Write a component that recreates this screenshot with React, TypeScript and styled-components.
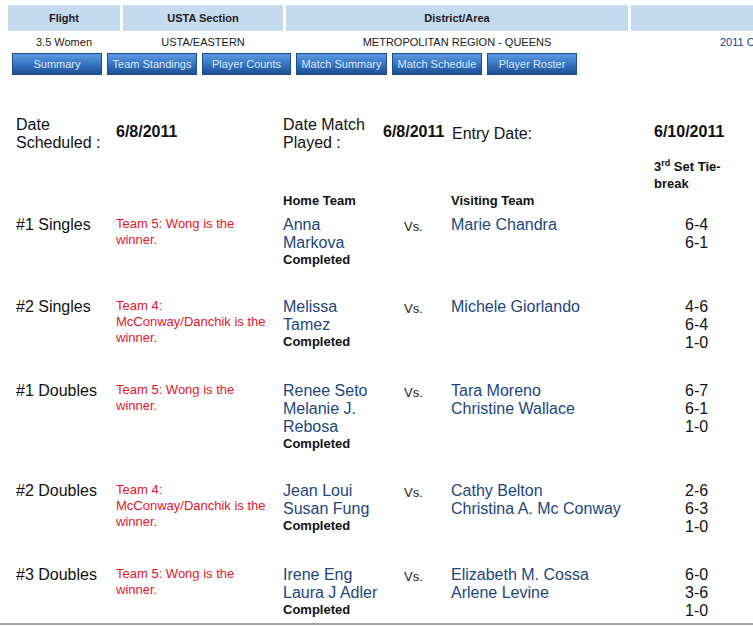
import styled, { createGlobalStyle } from "styled-components";

const GlobalStyle = createGlobalStyle`
	html, body {
		margin: 0;
		padding: 0;
		overflow: hidden;
		background: #ffffff;
	}
	body {
		font-family: "Liberation Sans", Arial, sans-serif;
		color: #111111;
	}
`;

const Frame = styled.div`
	box-sizing: border-box;
	width: 753px;
	height: 625px;
	padding: 5px 0 0 8px;
	overflow: hidden;
	border-bottom: 2px solid #a3a3a3;
`;

const InfoGrid = styled.div`
	display: grid;
	grid-template-columns: 112px 160px 342px 300px;
	column-gap: 3px;
	font-size: 11px;
`;

const InfoHead = styled.div`
	height: 26px;
	line-height: 26px;
	background: #c6daf0;
	text-align: center;
	font-weight: bold;
	color: #1c1c1c;
`;

const InfoCell = styled.div<{ $link?: boolean }>`
	margin-top: 3px;
	line-height: 16px;
	text-align: center;
	white-space: nowrap;
	color: ${(p) => (p.$link ? "#1d3f86" : "#1a1a1a")};
`;

const ButtonBar = styled.div`
	display: flex;
	gap: 5px;
	margin: 3px 0 0 4px;
`;

const NavButton = styled.button<{ $w?: number }>`
	box-sizing: border-box;
	width: ${(p) => p.$w ?? 90}px;
	height: 22px;
	padding: 0;
	border: 1px solid #1d4f8e;
	background: linear-gradient(#5e9be0 0%, #3a78c6 45%, #1d4f92 100%);
	color: #dce9f8;
	font-family: "Liberation Sans", Arial, sans-serif;
	font-size: 11px;
	cursor: pointer;
`;

const Content = styled.div`
	padding-left: 8px;
`;

const DateGrid = styled.div`
	display: grid;
	grid-template-columns: 100px 167px 100px 69px 202px auto;
	align-items: center;
	margin-top: 41px;
	font-size: 16px;
	line-height: 18px;
`;

const DateValue = styled.div`
	font-weight: bold;
	margin-top: -4px;
`;

const Row = styled.div<{ $pad?: number }>`
	display: grid;
	grid-template-columns: 100px 167px 121px 47px 203px auto;
	align-items: start;
	padding-bottom: ${(p) => p.$pad ?? 0}px;
`;

const TieLabel = styled.div`
	grid-column: 6;
	margin-top: 6px;
	font-size: 13px;
	font-weight: bold;
	line-height: 17px;
	width: 74px;
	sup {
		font-size: 9px;
		line-height: 0;
	}
`;

const ColHead = styled.div<{ $col: number }>`
	grid-column: ${(p) => p.$col};
	font-size: 13px;
	font-weight: bold;
	line-height: 16px;
	margin-top: 1px;
`;

const RowLabel = styled.div`
	font-size: 16px;
	line-height: 18px;
	padding-top: 7px;
`;

const Winner = styled.div`
	font-size: 13px;
	line-height: 16px;
	color: #e3172a;
	padding-top: 7px;
	padding-right: 10px;
`;

const Players = styled.div`
	padding-top: 7px;
	padding-right: 20px;
`;

const Player = styled.div`
	font-size: 16px;
	line-height: 18px;
	color: #21467c;
`;

const Status = styled.div`
	font-size: 13px;
	font-weight: bold;
	line-height: 16px;
`;

const Versus = styled.div`
	font-size: 13px;
	line-height: 18px;
	padding-top: 9px;
	color: #222222;
`;

const Scores = styled.div`
	font-size: 16px;
	line-height: 18px;
	padding: 7px 0 0 31px;
`;

type Match = {
	label: string;
	winner: string;
	home: string[];
	visitors: string[];
	scores: string[];
};

const matches: Match[] = [
	{
		label: "#1 Singles",
		winner: "Team 5: Wong is the winner.",
		home: ["Anna Markova"],
		visitors: ["Marie Chandra"],
		scores: ["6-4", "6-1"],
	},
	{
		label: "#2 Singles",
		winner: "Team 4: McConway/Danchik is the winner.",
		home: ["Melissa Tamez"],
		visitors: ["Michele Giorlando"],
		scores: ["4-6", "6-4", "1-0"],
	},
	{
		label: "#1 Doubles",
		winner: "Team 5: Wong is the winner.",
		home: ["Renee Seto", "Melanie J. Rebosa"],
		visitors: ["Tara Moreno", "Christine Wallace"],
		scores: ["6-7", "6-1", "1-0"],
	},
	{
		label: "#2 Doubles",
		winner: "Team 4: McConway/Danchik is the winner.",
		home: ["Jean Loui", "Susan Fung"],
		visitors: ["Cathy Belton", "Christina A. Mc Conway"],
		scores: ["2-6", "6-3", "1-0"],
	},
	{
		label: "#3 Doubles",
		winner: "Team 5: Wong is the winner.",
		home: ["Irene Eng", "Laura J Adler"],
		visitors: ["Elizabeth M. Cossa", "Arlene Levine"],
		scores: ["6-0", "3-6", "1-0"],
	},
];

const buttons: [string, number][] = [
	["Summary", 90],
	["Team Standings", 90],
	["Player Counts", 89],
	["Match Summary", 91],
	["Match Schedule", 90],
	["Player Roster", 90],
];

export default function App() {
	return (
		<>
			<GlobalStyle />
			<Frame>
				<InfoGrid>
					<InfoHead>Flight</InfoHead>
					<InfoHead>USTA Section</InfoHead>
					<InfoHead>District/Area</InfoHead>
					<InfoHead />
					<InfoCell>3.5 Women</InfoCell>
					<InfoCell>USTA/EASTERN</InfoCell>
					<InfoCell>METROPOLITAN REGION - QUEENS</InfoCell>
					<InfoCell $link>2011 Championship Year</InfoCell>
				</InfoGrid>
				<ButtonBar>
					{buttons.map(([name, w]) => (
						<NavButton key={name} $w={w}>
							{name}
						</NavButton>
					))}
				</ButtonBar>
				<Content>
					<DateGrid>
						<div>
							Date
							<br />
							Scheduled :
						</div>
						<DateValue>6/8/2011</DateValue>
						<div>
							Date Match
							<br />
							Played :
						</div>
						<DateValue>6/8/2011</DateValue>
						<div>Entry Date:</div>
						<DateValue>6/10/2011</DateValue>
					</DateGrid>
					<Row>
						<TieLabel>
							3<sup>rd</sup> Set Tie-break
						</TieLabel>
					</Row>
					<Row>
						<ColHead $col={3}>Home Team</ColHead>
						<ColHead $col={5}>Visiting Team</ColHead>
					</Row>
					{matches.map((m) => (
						<MatchRow key={m.label} match={m} />
					))}
				</Content>
			</Frame>
		</>
	);
}

function MatchRow({ match }: { match: Match }) {
	return (
		<Row $pad={23}>
			<RowLabel>{match.label}</RowLabel>
			<Winner>{match.winner}</Winner>
			<Players>
				{match.home.map((p) => (
					<Player key={p}>{p}</Player>
				))}
				<Status>Completed</Status>
			</Players>
			<Versus>Vs.</Versus>
			<Players>
				{match.visitors.map((p) => (
					<Player key={p}>{p}</Player>
				))}
			</Players>
			<Scores>
				{match.scores.map((s, i) => (
					<div key={i}>{s}</div>
				))}
			</Scores>
		</Row>
	);
}
